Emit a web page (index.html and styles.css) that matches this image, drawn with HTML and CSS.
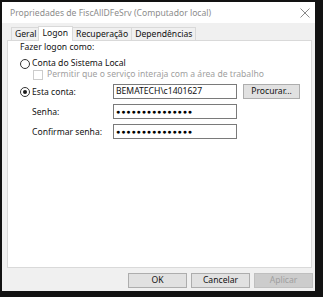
FILE: index.html
```html
<!DOCTYPE html>
<html lang="pt-BR">
<head>
    <meta charset="UTF-8">
    <title>Propriedades de FiscAllDFeSrv</title>
    <link rel="stylesheet" href="styles.css">
</head>
<body>
    <div class="window">
        <div class="titlebar">
            <span class="title">Propriedades de FiscAllDFeSrv (Computador local)</span>
            <svg class="close" width="10" height="10" viewBox="0 0 10 10">
                <path d="M0.5 0.5 L9.5 9.5 M9.5 0.5 L0.5 9.5" stroke="#8a8a8a" stroke-width="1" fill="none"/>
            </svg>
        </div>
        <div class="content">
            <div class="tabs">
                <div class="tab">Geral</div>
                <div class="tab active">Logon</div>
                <div class="tab">Recuperação</div>
                <div class="tab">Dependências</div>
            </div>
            <div class="panel">
                <div class="heading">Fazer logon como:</div>
                <div class="option">
                    <span class="radio"></span>
                    <span>Conta do Sistema Local</span>
                </div>
                <div class="option disabled">
                    <span class="checkbox"></span>
                    <span>Permitir que o serviço interaja com a área de trabalho</span>
                </div>
                <div class="field first">
                    <div class="label with-radio">
                        <span class="radio checked"></span>
                        <span>Esta conta:</span>
                    </div>
                    <div class="input">BEMATECH\c1401627</div>
                    <button class="btn browse">Procurar...</button>
                </div>
                <div class="field">
                    <div class="label">Senha:</div>
                    <div class="input dots">●●●●●●●●●●●●●●●</div>
                </div>
                <div class="field">
                    <div class="label">Confirmar senha:</div>
                    <div class="input dots">●●●●●●●●●●●●●●●</div>
                </div>
            </div>
            <div class="actions">
                <button class="btn">OK</button>
                <button class="btn">Cancelar</button>
                <button class="btn" disabled>Aplicar</button>
            </div>
        </div>
    </div>
</body>
</html>
```

FILE: styles.css
```css
body {
    margin: 0;
    background-color: #121212;
    font-family: "Noto Sans", "Open Sans", sans-serif;
    font-size: 8.6px;
    color: #111111;
}

.window {
    margin: 2px 8px 6px 2px;
    width: 313px;
    height: 289px;
    background-color: #f0f0f0;
    display: flex;
    flex-direction: column;
}

.titlebar {
    height: 21px;
    background-color: #ffffff;
    display: flex;
    align-items: center;
    justify-content: space-between;
    padding: 0 5px 0 8px;
}

.title {
    color: #8c8c8c;
    font-size: 8.6px;
}

.content {
    flex: 1;
    padding: 3px 2px 0 5px;
    display: flex;
    flex-direction: column;
}

.tabs {
    display: flex;
    align-items: flex-end;
    height: 14px;
    padding-left: 4px;
}

.tab {
    height: 12px;
    line-height: 12px;
    padding: 0 3px;
    border: 1px solid #d9d9d9;
    border-bottom: none;
    background-color: #f0f0f0;
    margin-right: -1px;
}

.tab.active {
    height: 14px;
    line-height: 13px;
    background-color: #ffffff;
    margin: 0 -1px -1px -2px;
    padding: 0 4px;
    position: relative;
    z-index: 1;
}

.panel {
    height: 226px;
    margin-right: 1px;
    background-color: #ffffff;
    border: 1px solid #d9d9d9;
    padding: 0 0 0 12px;
}

.heading {
    height: 13px;
    line-height: 13px;
}

.option {
    display: flex;
    align-items: center;
    height: 11px;
    line-height: 11px;
    margin-top: 4px;
}

.option.disabled {
    margin-top: 0;
    padding-left: 13px;
    color: #a0a0a0;
}

.radio {
    width: 8px;
    height: 8px;
    border: 1px solid #333333;
    border-radius: 50%;
    margin-right: 2px;
    display: flex;
    align-items: center;
    justify-content: center;
    background-color: #ffffff;
}

.radio.checked::after {
    content: "";
    width: 4px;
    height: 4px;
    border-radius: 50%;
    background-color: #1a1a1a;
}

.checkbox {
    width: 8px;
    height: 8px;
    border: 1px solid #cccccc;
    margin-right: 4px;
}

.field {
    display: flex;
    align-items: center;
    margin-top: 5px;
}

.field.first {
    margin-top: 4px;
}

.label {
    width: 93px;
    padding-left: 12px;
    box-sizing: border-box;
}

.label.with-radio {
    padding-left: 0;
    display: flex;
    align-items: center;
}

.input {
    width: 120px;
    height: 13px;
    line-height: 13px;
    border: 1px solid #7a7a7a;
    padding-left: 2px;
    white-space: nowrap;
    overflow: hidden;
}

.input.dots {
    font-size: 7px;
    letter-spacing: 0.9px;
    color: #000000;
}

.btn {
    font-family: inherit;
    font-size: 8.6px;
    color: #111111;
    background-color: #e1e1e1;
    border: 1px solid #adadad;
    padding: 0;
    height: 15px;
    line-height: 13px;
}

.browse {
    width: 57px;
    margin-left: 6px;
}

.actions {
    display: flex;
    justify-content: flex-end;
    gap: 4px;
    margin-top: 5px;
}

.actions .btn {
    width: 59px;
}

.btn:disabled {
    background-color: #cccccc;
    border-color: #bfbfbf;
    color: #a0a0a0;
}
```
